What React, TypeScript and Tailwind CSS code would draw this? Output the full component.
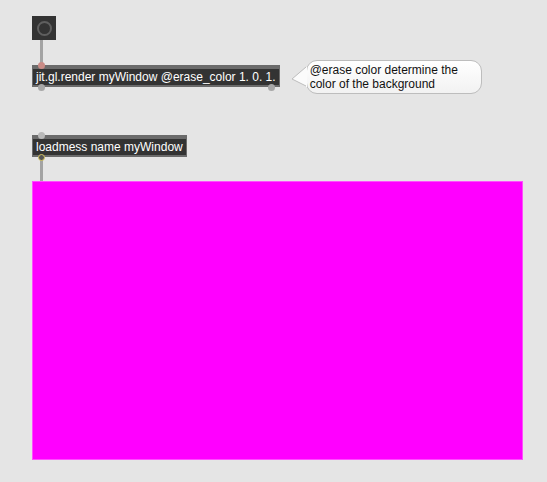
const font = { fontFamily: '"Liberation Sans", Arial, sans-serif' }

function Port({ className }: { className: string }) {
  return <span className={`absolute w-[7px] h-[7px] rounded-full ${className}`} />
}

function ObjectBox({ text, children }: { text: string; children?: React.ReactNode }) {
  return (
    <div className="relative bg-[#6b6b6b] pt-[4px] pb-[2px] px-[1px]">
      <div className="bg-[#333333] text-white text-[12px] leading-[16px] px-[3px] whitespace-nowrap" style={font}>
        {text}
      </div>
      {children}
    </div>
  )
}

function Cord({ h }: { h: string }) {
  return <div className={`ml-[8px] w-[3px] bg-[#a3a3a3] ${h}`} />
}

export default function App() {
  return (
    <div className="w-[547px] h-[482px] bg-[#e5e5e5] overflow-hidden pl-[32px] pt-[16px] flex flex-col items-start" style={font}>
      {/* bang */}
      <div className="w-[24px] h-[24px] bg-[#333333] flex items-center justify-center">
        <div className="w-[15px] h-[15px] rounded-full border-2 border-[#5f5f5f]" />
      </div>
      <Cord h="h-[25px]" />

      <div className="flex items-start gap-[11px] h-[22px]">
        <ObjectBox text="jit.gl.render myWindow @erase_color 1. 0. 1.">
          <Port className="left-[6px] top-[-3px] bg-[#c98b86]" />
          <Port className="left-[6px] bottom-[-4px] bg-[#a8a8a8]" />
          <Port className="right-[5px] bottom-[-4px] bg-[#a8a8a8]" />
        </ObjectBox>

        {/* comment bubble */}
        <div className="relative flex items-center -mt-[5px]">
          <svg width="16" height="22" viewBox="0 0 16 22" className="-mr-[1px] z-10">
            <path d="M15 1 L1 13 L15 20" fill="#fbfbfb" stroke="#bdbdbd" strokeWidth="1" />
            <rect x="15" y="1" width="2" height="20" fill="#fbfbfb" />
          </svg>
          <div className="w-[176px] h-[34px] rounded-[11px] border border-[#bdbdbd] bg-gradient-to-b from-white to-[#f2f2f2] px-[3px] pt-[2px] text-[12px] leading-[14px] text-[#111]">
            <div>@erase color determine the</div>
            <div>color of the background</div>
          </div>
        </div>
      </div>

      <div className="mt-[48px]">
        <ObjectBox text="loadmess name myWindow">
          <Port className="left-[6px] top-[-3px] bg-[#b8b8b8]" />
          <Port className="left-[6px] bottom-[-4px] bg-[#555555] border border-[#d8c660]" />
        </ObjectBox>
      </div>
      <Cord h="h-[24px]" />

      {/* jit window */}
      <div className="w-[491px] h-[279px] bg-[#ff00ff] border border-[#ff4dff]" />
    </div>
  )
}
